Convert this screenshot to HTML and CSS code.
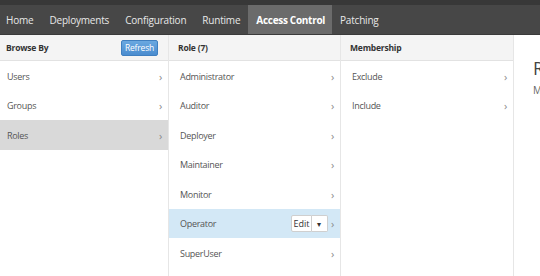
FILE: index.html
```html
<!DOCTYPE html>
<html lang="en">
<head>
  <meta charset="UTF-8" />
  <title>Access Control</title>
  <link rel="stylesheet" href="styles.css">
</head>
<body>
  <div class="topstrip"></div>
  <nav class="navbar">
    <a class="nav-item">Home</a>
    <a class="nav-item">Deployments</a>
    <a class="nav-item">Configuration</a>
    <a class="nav-item">Runtime</a>
    <a class="nav-item active">Access Control</a>
    <a class="nav-item">Patching</a>
  </nav>

  <div class="browser">
    <div class="column col-browse">
      <div class="col-header">
        <span>Browse By</span>
        <button class="btn-refresh">Refresh</button>
      </div>
      <ul class="list">
        <li>Users<span class="chev">&rsaquo;</span></li>
        <li>Groups<span class="chev">&rsaquo;</span></li>
        <li class="selected">Roles<span class="chev">&rsaquo;</span></li>
      </ul>
    </div>

    <div class="column col-role">
      <div class="col-header"><span>Role (7)</span></div>
      <ul class="list">
        <li>Administrator<span class="chev">&rsaquo;</span></li>
        <li>Auditor<span class="chev">&rsaquo;</span></li>
        <li>Deployer<span class="chev">&rsaquo;</span></li>
        <li>Maintainer<span class="chev">&rsaquo;</span></li>
        <li>Monitor<span class="chev">&rsaquo;</span></li>
        <li class="hover">Operator
          <span class="edit-group">
            <button class="btn-edit">Edit</button><button class="btn-caret">&#9662;</button>
          </span>
          <span class="chev">&rsaquo;</span>
        </li>
        <li>SuperUser<span class="chev">&rsaquo;</span></li>
      </ul>
    </div>

    <div class="column col-member">
      <div class="col-header"><span>Membership</span></div>
      <ul class="list">
        <li>Exclude<span class="chev">&rsaquo;</span></li>
        <li>Include<span class="chev">&rsaquo;</span></li>
      </ul>
    </div>

    <div class="detail">
      <h2>Role</h2>
      <p>Membership</p>
    </div>
  </div>
</body>
</html>
```

FILE: styles.css
```css
* {
  margin: 0;
  padding: 0;
  box-sizing: border-box;
}

body {
  font-family: 'Open Sans', sans-serif;
  font-size: 9px;
  color: #555;
  background: #fff;
  width: 540px;
  height: 276px;
  overflow: hidden;
}

.topstrip {
  height: 5px;
  background: #383838;
}

.navbar {
  display: flex;
  height: 30px;
  background: #474747;
  border-bottom: 1px solid #3a3a3a;
}

.nav-item {
  display: flex;
  align-items: center;
  padding: 0 8px;
  color: #e8e8e8;
  font-size: 10px;
  letter-spacing: -0.2px;
}

.nav-item:first-child {
  padding-left: 6px;
}

.nav-item.active {
  background: #6b6b6b;
  color: #fff;
  font-weight: 700;
  padding: 0 7px 0 8px;
  letter-spacing: -0.3px;
}

.browser {
  display: flex;
  height: 241px;
}

.column {
  display: flex;
  flex-direction: column;
  flex-shrink: 0;
  border-right: 1px solid #e6e6e6;
}

.col-browse { width: 169px; }
.col-role { width: 172px; }
.col-member { width: 173px; }

.col-header {
  display: flex;
  align-items: center;
  justify-content: space-between;
  height: 26px;
  padding: 0 10px 0 6px;
  background: #f4f4f4;
  border-bottom: 1px solid #e2e2e2;
  color: #333;
  font-weight: 700;
  font-size: 8.5px;
  letter-spacing: -0.2px;
}

.col-role .col-header,
.col-member .col-header {
  padding-left: 9px;
}

.btn-refresh {
  font-family: inherit;
  font-size: 8.5px;
  font-weight: 400;
  letter-spacing: -0.2px;
  color: #fff;
  background: linear-gradient(#6aa8e0, #4a8ccf);
  border: 1px solid #3f7fc0;
  border-radius: 2px;
  width: 37px;
  height: 16px;
}

.list {
  list-style: none;
}

.list li {
  display: flex;
  align-items: center;
  height: 29.5px;
  padding: 1px 6px 0 7px;
  letter-spacing: -0.3px;
}

.col-role .list li,
.col-member .list li {
  padding-left: 11px;
}

.list li.selected {
  background: #d9d9d9;
}

.list li.hover {
  background: #d3e8f6;
}

.chev {
  margin-left: auto;
  color: #888;
  font-size: 11px;
}

.edit-group {
  display: flex;
  margin-left: auto;
  margin-right: 3px;
}

.edit-group + .chev {
  margin-left: 0;
}

.btn-edit,
.btn-caret {
  font-family: inherit;
  font-size: 9px;
  color: #333;
  background: #fff;
  border: 1px solid #cfcfcf;
  height: 17px;
}

.btn-edit {
  width: 21px;
  border-radius: 2px 0 0 2px;
}

.btn-caret {
  width: 16px;
  font-size: 8px;
  border-left: none;
  border-radius: 0 2px 2px 0;
}

.detail {
  padding: 21px 0 0 19px;
  white-space: nowrap;
}

.detail h2 {
  font-weight: 400;
  font-size: 18px;
  color: #444;
}

.detail p {
  margin-top: 3px;
  font-size: 10px;
  color: #666;
}
```
